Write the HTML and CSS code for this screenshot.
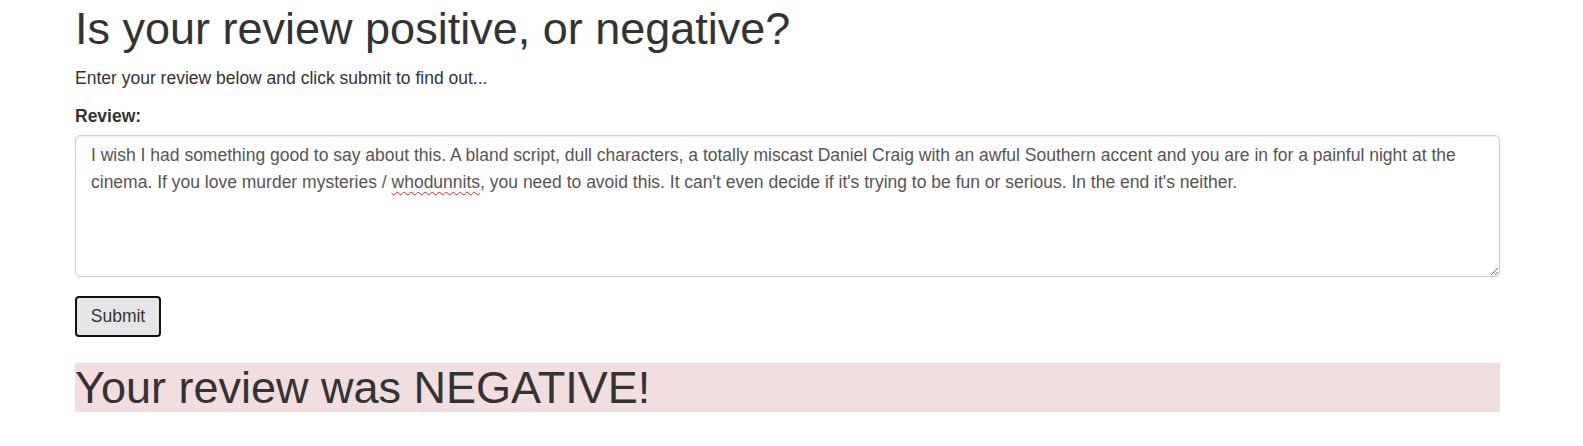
FILE: index.html
```html
<!DOCTYPE html>
<html lang="en">
<head>
<meta charset="utf-8">
<title>Review sentiment</title>
<link rel="stylesheet" href="styles.css">
</head>
<body>
<main class="container">
  <h1 class="title">Is your review positive, or negative?</h1>
  <p class="lead-text">Enter your review below and click submit to find out...</p>
  <form class="review-form">
    <div class="form-group">
      <label class="field-label" for="review">Review:</label>
      <div class="review-box" id="review" role="textbox" aria-multiline="true">I wish I had something good to say about this. A bland script, dull characters, a totally miscast Daniel Craig with an awful Southern accent and you are in for a painful night at the cinema. If you love murder mysteries / <span class="misspelt">whodunnits</span>, you need to avoid this. It can't even decide if it's trying to be fun or serious. In the end it's neither.</div>
    </div>
    <button type="button" class="submit-btn">Submit</button>
  </form>
  <h1 class="result negative">Your review was NEGATIVE!</h1>
</main>
</body>
</html>
```

FILE: styles.css
```css
html, body {
  margin: 0;
  padding: 0;
  background: #ffffff;
}

body {
  font-family: "Liberation Sans", Arial, Helvetica, sans-serif;
  font-size: 17.5px;
  line-height: 25px;
  color: #333333;
}

.container {
  width: 1425px;
  margin-left: 75px;
  padding-top: 4px;
}

.title {
  font-size: 45px;
  font-weight: 400;
  line-height: 49.5px;
  margin: 0 0 12.5px;
}

.lead-text {
  margin: 0 0 12.5px;
}

.form-group {
  margin-bottom: 18.75px;
}

.field-label {
  display: inline-block;
  font-weight: 700;
  margin-bottom: 6.25px;
}

.review-box {
  box-sizing: border-box;
  width: 100%;
  height: 142px;
  padding: 6.5px 15px;
  border: 1px solid #cccccc;
  border-radius: 5px;
  box-shadow: inset 0 1px 1px rgba(0, 0, 0, 0.075);
  color: #555555;
  background: #ffffff;
  line-height: 27px;
  overflow: auto;
  resize: vertical;
  white-space: pre-wrap;
}

.misspelt {
  text-decoration: underline wavy #e02020;
  text-decoration-thickness: 1px;
  text-underline-offset: 3px;
}

.submit-btn {
  display: block;
  margin-top: 2px;
  box-sizing: border-box;
  width: 86px;
  height: 41px;
  padding: 0 12px;
  font-family: inherit;
  font-size: 17.5px;
  line-height: 25px;
  color: #333333;
  background: #e6e6e6;
  border: 2px solid #111111;
  border-radius: 4px;
}

.result {
  font-size: 45px;
  font-weight: 400;
  line-height: 49.5px;
  margin: 26px 0 12.5px;
}

.negative {
  background: #f2dede;
}
```
